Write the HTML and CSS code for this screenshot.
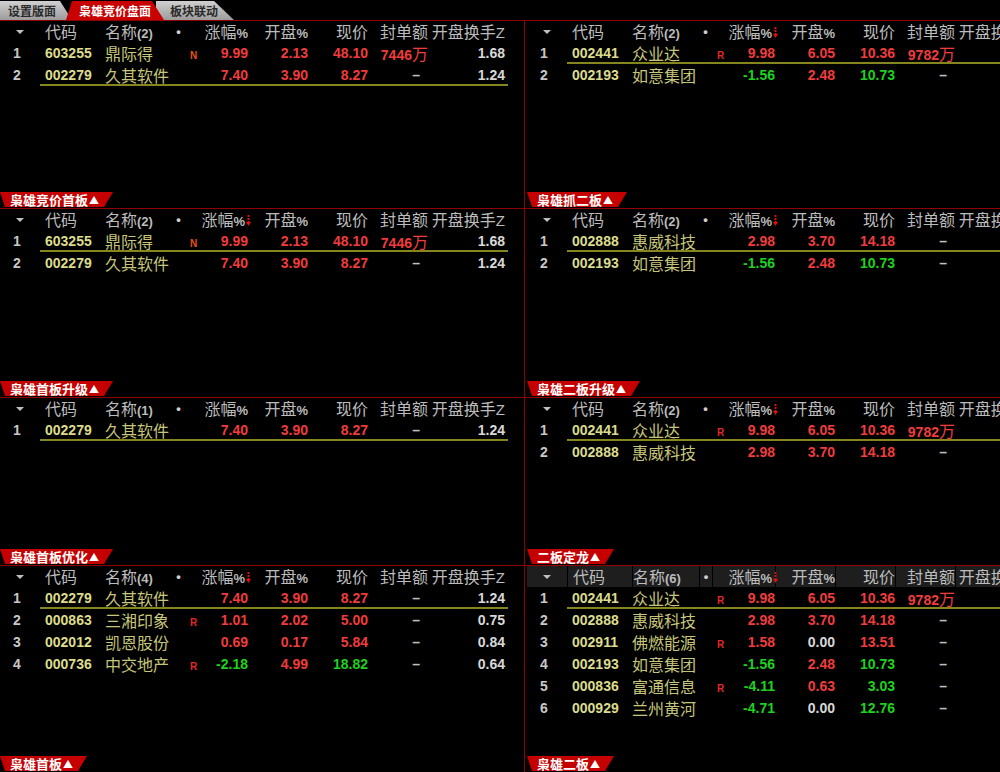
FILE: index.html
```html
<!DOCTYPE html>
<html lang="zh-CN">
<head>
  <meta charset="UTF-8" />
  <title>枭雄竞价盘面</title>
  <link rel="stylesheet" href="styles.css">
</head>
<body>

<div class="tabs">
  <div class="tab t-gray t-first">设置版面</div>
  <div class="tab t-red">枭雄竞价盘面</div>
  <div class="tab t-gray t-last">板块联动</div>
</div>

<div class="board">
  <!-- 左列 -->
  <div class="col">
    <div class="panel p1">
      <div class="hdr">
        <span class="num"><i class="tri"></i></span>
        <div class="cells">
          <span class="code">代码</span><span>名称<b>(2)</b></span><span class="dot">•</span><span></span><span class="r">涨幅<b>%</b></span><span class="r">开盘<b>%</b></span><span class="r">现价</span><span class="r">封单额</span><span class="r">开盘换手<b class="z">Z</b></span>
        </div>
      </div>
      <div class="row">
        <span class="num">1</span>
        <div class="cells">
          <span class="code">603255</span><span class="name">鼎际得</span><span></span><span class="mk n">N</span><span class="v up">9.99</span><span class="v up">2.13</span><span class="v up">48.10</span><span class="v up">7446<i>万</i></span><span class="v wh">1.68</span>
        </div>
      </div>
      <div class="row sel">
        <span class="num">2</span>
        <div class="cells">
          <span class="code">002279</span><span class="name">久其软件</span><span></span><span></span><span class="v up">7.40</span><span class="v up">3.90</span><span class="v up">8.27</span><span class="v dash">–</span><span class="v wh">1.24</span>
        </div>
      </div>
      <div class="label">枭雄竞价首板<span class="ar">▲</span></div>
    </div>

    <div class="panel p2">
      <div class="hdr">
        <span class="num"><i class="tri"></i></span>
        <div class="cells">
          <span class="code">代码</span><span>名称<b>(2)</b></span><span class="dot">•</span><span></span><span class="r">涨幅<b>%</b><svg class="sort" width="5" height="13"><path d="M2.5 1v7" stroke="#e01010" stroke-width="2" stroke-dasharray="2 1"/><path d="M0 8h5l-2.5 4z" fill="#e01010"/></svg></span><span class="r">开盘<b>%</b></span><span class="r">现价</span><span class="r">封单额</span><span class="r">开盘换手<b class="z">Z</b></span>
        </div>
      </div>
      <div class="row sel">
        <span class="num">1</span>
        <div class="cells">
          <span class="code">603255</span><span class="name">鼎际得</span><span></span><span class="mk n">N</span><span class="v up">9.99</span><span class="v up">2.13</span><span class="v up">48.10</span><span class="v up">7446<i>万</i></span><span class="v wh">1.68</span>
        </div>
      </div>
      <div class="row">
        <span class="num">2</span>
        <div class="cells">
          <span class="code">002279</span><span class="name">久其软件</span><span></span><span></span><span class="v up">7.40</span><span class="v up">3.90</span><span class="v up">8.27</span><span class="v dash">–</span><span class="v wh">1.24</span>
        </div>
      </div>
      <div class="label">枭雄首板升级<span class="ar">▲</span></div>
    </div>

    <div class="panel p3">
      <div class="hdr">
        <span class="num"><i class="tri"></i></span>
        <div class="cells">
          <span class="code">代码</span><span>名称<b>(1)</b></span><span class="dot">•</span><span></span><span class="r">涨幅<b>%</b></span><span class="r">开盘<b>%</b></span><span class="r">现价</span><span class="r">封单额</span><span class="r">开盘换手<b class="z">Z</b></span>
        </div>
      </div>
      <div class="row sel">
        <span class="num">1</span>
        <div class="cells">
          <span class="code">002279</span><span class="name">久其软件</span><span></span><span></span><span class="v up">7.40</span><span class="v up">3.90</span><span class="v up">8.27</span><span class="v dash">–</span><span class="v wh">1.24</span>
        </div>
      </div>
      <div class="label">枭雄首板优化<span class="ar">▲</span></div>
    </div>

    <div class="panel p4">
      <div class="hdr">
        <span class="num"><i class="tri"></i></span>
        <div class="cells">
          <span class="code">代码</span><span>名称<b>(4)</b></span><span class="dot">•</span><span></span><span class="r">涨幅<b>%</b><svg class="sort" width="5" height="13"><path d="M2.5 1v7" stroke="#e01010" stroke-width="2" stroke-dasharray="2 1"/><path d="M0 8h5l-2.5 4z" fill="#e01010"/></svg></span><span class="r">开盘<b>%</b></span><span class="r">现价</span><span class="r">封单额</span><span class="r">开盘换手<b class="z">Z</b></span>
        </div>
      </div>
      <div class="row sel">
        <span class="num">1</span>
        <div class="cells">
          <span class="code">002279</span><span class="name">久其软件</span><span></span><span></span><span class="v up">7.40</span><span class="v up">3.90</span><span class="v up">8.27</span><span class="v dash">–</span><span class="v wh">1.24</span>
        </div>
      </div>
      <div class="row">
        <span class="num">2</span>
        <div class="cells">
          <span class="code">000863</span><span class="name">三湘印象</span><span></span><span class="mk">R</span><span class="v up">1.01</span><span class="v up">2.02</span><span class="v up">5.00</span><span class="v dash">–</span><span class="v wh">0.75</span>
        </div>
      </div>
      <div class="row">
        <span class="num">3</span>
        <div class="cells">
          <span class="code">002012</span><span class="name">凯恩股份</span><span></span><span></span><span class="v up">0.69</span><span class="v up">0.17</span><span class="v up">5.84</span><span class="v dash">–</span><span class="v wh">0.84</span>
        </div>
      </div>
      <div class="row">
        <span class="num">4</span>
        <div class="cells">
          <span class="code">000736</span><span class="name">中交地产</span><span></span><span class="mk">R</span><span class="v dn">-2.18</span><span class="v up">4.99</span><span class="v dn">18.82</span><span class="v dash">–</span><span class="v wh">0.64</span>
        </div>
      </div>
      <div class="label">枭雄首板<span class="ar">▲</span></div>
    </div>
  </div>

  <!-- 右列 -->
  <div class="col right">
    <div class="panel p1">
      <div class="hdr">
        <span class="num"><i class="tri"></i></span>
        <div class="cells">
          <span class="code">代码</span><span>名称<b>(2)</b></span><span class="dot">•</span><span></span><span class="r">涨幅<b>%</b><svg class="sort" width="5" height="13"><path d="M2.5 1v7" stroke="#e01010" stroke-width="2" stroke-dasharray="2 1"/><path d="M0 8h5l-2.5 4z" fill="#e01010"/></svg></span><span class="r">开盘<b>%</b></span><span class="r">现价</span><span class="r">封单额</span><span class="r">开盘换手<b class="z">Z</b></span>
        </div>
      </div>
      <div class="row sel">
        <span class="num">1</span>
        <div class="cells">
          <span class="code">002441</span><span class="name">众业达</span><span></span><span class="mk">R</span><span class="v up">9.98</span><span class="v up">6.05</span><span class="v up">10.36</span><span class="v up">9782<i>万</i></span><span></span>
        </div>
      </div>
      <div class="row">
        <span class="num">2</span>
        <div class="cells">
          <span class="code">002193</span><span class="name">如意集团</span><span></span><span></span><span class="v dn">-1.56</span><span class="v up">2.48</span><span class="v dn">10.73</span><span class="v dash">–</span><span></span>
        </div>
      </div>
      <div class="label">枭雄抓二板<span class="ar">▲</span></div>
    </div>

    <div class="panel p2">
      <div class="hdr">
        <span class="num"><i class="tri"></i></span>
        <div class="cells">
          <span class="code">代码</span><span>名称<b>(2)</b></span><span class="dot">•</span><span></span><span class="r">涨幅<b>%</b><svg class="sort" width="5" height="13"><path d="M2.5 1v7" stroke="#e01010" stroke-width="2" stroke-dasharray="2 1"/><path d="M0 8h5l-2.5 4z" fill="#e01010"/></svg></span><span class="r">开盘<b>%</b></span><span class="r">现价</span><span class="r">封单额</span><span class="r">开盘换手<b class="z">Z</b></span>
        </div>
      </div>
      <div class="row sel">
        <span class="num">1</span>
        <div class="cells">
          <span class="code">002888</span><span class="name">惠威科技</span><span></span><span></span><span class="v up">2.98</span><span class="v up">3.70</span><span class="v up">14.18</span><span class="v dash">–</span><span></span>
        </div>
      </div>
      <div class="row">
        <span class="num">2</span>
        <div class="cells">
          <span class="code">002193</span><span class="name">如意集团</span><span></span><span></span><span class="v dn">-1.56</span><span class="v up">2.48</span><span class="v dn">10.73</span><span class="v dash">–</span><span></span>
        </div>
      </div>
      <div class="label">枭雄二板升级<span class="ar">▲</span></div>
    </div>

    <div class="panel p3">
      <div class="hdr">
        <span class="num"><i class="tri"></i></span>
        <div class="cells">
          <span class="code">代码</span><span>名称<b>(2)</b></span><span class="dot">•</span><span></span><span class="r">涨幅<b>%</b><svg class="sort" width="5" height="13"><path d="M2.5 1v7" stroke="#e01010" stroke-width="2" stroke-dasharray="2 1"/><path d="M0 8h5l-2.5 4z" fill="#e01010"/></svg></span><span class="r">开盘<b>%</b></span><span class="r">现价</span><span class="r">封单额</span><span class="r">开盘换手<b class="z">Z</b></span>
        </div>
      </div>
      <div class="row sel">
        <span class="num">1</span>
        <div class="cells">
          <span class="code">002441</span><span class="name">众业达</span><span></span><span class="mk">R</span><span class="v up">9.98</span><span class="v up">6.05</span><span class="v up">10.36</span><span class="v up">9782<i>万</i></span><span></span>
        </div>
      </div>
      <div class="row">
        <span class="num">2</span>
        <div class="cells">
          <span class="code">002888</span><span class="name">惠威科技</span><span></span><span></span><span class="v up">2.98</span><span class="v up">3.70</span><span class="v up">14.18</span><span class="v dash">–</span><span></span>
        </div>
      </div>
      <div class="label">二板定龙<span class="ar">▲</span></div>
    </div>

    <div class="panel p4 on">
      <div class="hdr">
        <span class="num"><i class="tri"></i></span>
        <div class="cells">
          <span class="code">代码</span><span>名称<b>(6)</b></span><span class="dot">•</span><span class="nb"></span><span class="r">涨幅<b>%</b><svg class="sort" width="5" height="13"><path d="M2.5 1v7" stroke="#e01010" stroke-width="2" stroke-dasharray="2 1"/><path d="M0 8h5l-2.5 4z" fill="#e01010"/></svg></span><span class="r">开盘<b>%</b></span><span class="r">现价</span><span class="r">封单额</span><span class="r">开盘换手<b class="z">Z</b></span>
        </div>
      </div>
      <div class="row sel">
        <span class="num">1</span>
        <div class="cells">
          <span class="code">002441</span><span class="name">众业达</span><span></span><span class="mk">R</span><span class="v up">9.98</span><span class="v up">6.05</span><span class="v up">10.36</span><span class="v up">9782<i>万</i></span><span></span>
        </div>
      </div>
      <div class="row">
        <span class="num">2</span>
        <div class="cells">
          <span class="code">002888</span><span class="name">惠威科技</span><span></span><span></span><span class="v up">2.98</span><span class="v up">3.70</span><span class="v up">14.18</span><span class="v dash">–</span><span></span>
        </div>
      </div>
      <div class="row">
        <span class="num">3</span>
        <div class="cells">
          <span class="code">002911</span><span class="name">佛燃能源</span><span></span><span class="mk">R</span><span class="v up">1.58</span><span class="v wh">0.00</span><span class="v up">13.51</span><span class="v dash">–</span><span></span>
        </div>
      </div>
      <div class="row">
        <span class="num">4</span>
        <div class="cells">
          <span class="code">002193</span><span class="name">如意集团</span><span></span><span></span><span class="v dn">-1.56</span><span class="v up">2.48</span><span class="v dn">10.73</span><span class="v dash">–</span><span></span>
        </div>
      </div>
      <div class="row">
        <span class="num">5</span>
        <div class="cells">
          <span class="code">000836</span><span class="name">富通信息</span><span></span><span class="mk">R</span><span class="v dn">-4.11</span><span class="v up">0.63</span><span class="v dn">3.03</span><span class="v dash">–</span><span></span>
        </div>
      </div>
      <div class="row">
        <span class="num">6</span>
        <div class="cells">
          <span class="code">000929</span><span class="name">兰州黄河</span><span></span><span></span><span class="v dn">-4.71</span><span class="v wh">0.00</span><span class="v dn">12.76</span><span class="v dash">–</span><span></span>
        </div>
      </div>
      <div class="label">枭雄二板<span class="ar">▲</span></div>
    </div>
  </div>
</div>

</body>
</html>
```

FILE: styles.css
```css
body {
  margin: 0;
  width: 1000px;
  height: 772px;
  overflow: hidden;
  background: #000;
  font-family: "Noto Sans CJK SC", sans-serif;
  color: #b8b8b8;
}

/* 顶部标签 */
.tabs {
  display: flex;
  height: 20px;
  padding-top: 1px;
  box-sizing: border-box;
}
.tab {
  height: 19px;
  line-height: 19px;
  font-size: 12px;
  font-weight: bold;
  white-space: nowrap;
  box-sizing: border-box;
}
.t-gray {
  background: linear-gradient(#d0d0d0, #9c9c9c);
  color: #2a2a2a;
}
.t-first {
  width: 72px;
  padding-left: 8px;
  clip-path: polygon(0 0, calc(100% - 12px) 0, 100% 100%, 0 100%);
}
.t-red {
  width: 98px;
  margin-left: -6px;
  padding-left: 13px;
  background: #c80000;
  color: #fff;
  z-index: 2;
  clip-path: polygon(6px 0, calc(100% - 12px) 0, 100% 100%, 0 100%);
}
.t-last {
  width: 78px;
  margin-left: -8px;
  padding-left: 14px;
  z-index: 1;
  clip-path: polygon(0 0, calc(100% - 20px) 0, 100% 100%, 0 100%);
}

/* 版面 */
.board {
  display: flex;
  height: 752px;
}
.col {
  width: 524px;
  display: flex;
  flex-direction: column;
  border-right: 1px solid #8c0000;
}
.col.right {
  width: 475px;
  border-right: none;
}
.panel {
  display: flex;
  flex-direction: column;
  border-top: 1px solid #8c0000;
  overflow: hidden;
  box-sizing: border-box;
}
.right .panel {
  padding-left: 2px;
}
.p1 { height: 188px; }
.p2 { height: 189px; }
.p3 { height: 168px; }
.p4 { height: 207px; }

.hdr, .row {
  display: flex;
  flex-shrink: 0;
  height: 22px;
  line-height: 22px;
  white-space: nowrap;
}
.hdr {
  height: 21px;
  line-height: 21px;
  font-size: 16px;
  color: #bcbcbc;
}
.hdr b {
  font-family: "Liberation Sans", sans-serif;
  font-size: 13px;
}
.hdr b.z {
  font-size: 15px;
  font-weight: normal;
}
.num {
  width: 34px;
  padding-right: 6px;
  text-align: center;
  font: bold 14px/22px "Liberation Sans", sans-serif;
  color: #c8c8c8;
  flex-shrink: 0;
}
.tri {
  display: inline-block;
  margin-left: 6px;
  border-left: 4px solid transparent;
  border-right: 4px solid transparent;
  border-top: 4px solid #c0c0c0;
  vertical-align: 3px;
}
.cells {
  display: grid;
  grid-template-columns: 65px 67px 13px 15px 48px 60px 60px 60px 77px;
  width: 465px;
  padding-right: 3px;
  flex-shrink: 0;
  box-sizing: content-box;
}
.sel .cells {
  height: 22px;
  box-sizing: border-box;
  width: 468px;
  border-bottom: 2px solid #86861e;
}
.code {
  padding-left: 5px;
}
.row .code {
  font: bold 14px/22px "Liberation Sans", sans-serif;
  color: #dcdc8c;
}
.name {
  font-size: 16px;
  color: #c6c67a;
}
.dot {
  text-align: center;
  font: bold 13px/21px "Liberation Sans", sans-serif;
  color: #d0d0d0;
}
.mk {
  padding-left: 5px;
  font: bold 10px/28px "Liberation Sans", sans-serif;
  color: #e02828;
}
.mk.n {
  color: #e85010;
}
.r {
  text-align: right;
}
.sort {
  vertical-align: -1px;
  margin-left: 1px;
  margin-right: -3px;
}
.v {
  text-align: right;
  font: bold 14px/22px "Liberation Sans", sans-serif;
}
.v i {
  font-style: normal;
  font-weight: normal;
  font-size: 16px;
  font-family: "Noto Sans CJK SC", sans-serif;
}
.up { color: #f03c3c; }
.dn { color: #1ed21e; }
.wh { color: #d8d8d8; }
.dash {
  color: #c0c0c0;
  padding-right: 8px;
}

/* 选中版面的表头 */
.on .hdr {
  background: #1e1e1e;
}
.on .hdr .num,
.on .hdr .cells > span {
  border-right: 1px solid #000;
}
.on .hdr .cells > .nb {
  border-right: none;
}

.label {
  margin-top: auto;
  margin-bottom: 1px;
  align-self: flex-start;
  height: 15px;
  line-height: 15px;
  padding: 0 14px 0 10px;
  background: #c40000;
  color: #fff;
  font-size: 13px;
  font-weight: bold;
  white-space: nowrap;
  flex-shrink: 0;
  clip-path: polygon(0 0, 100% 0, calc(100% - 9px) 100%, 5px 100%);
}
.label .ar {
  font-size: 10px;
  margin-left: 1px;
  vertical-align: 1px;
}
```
